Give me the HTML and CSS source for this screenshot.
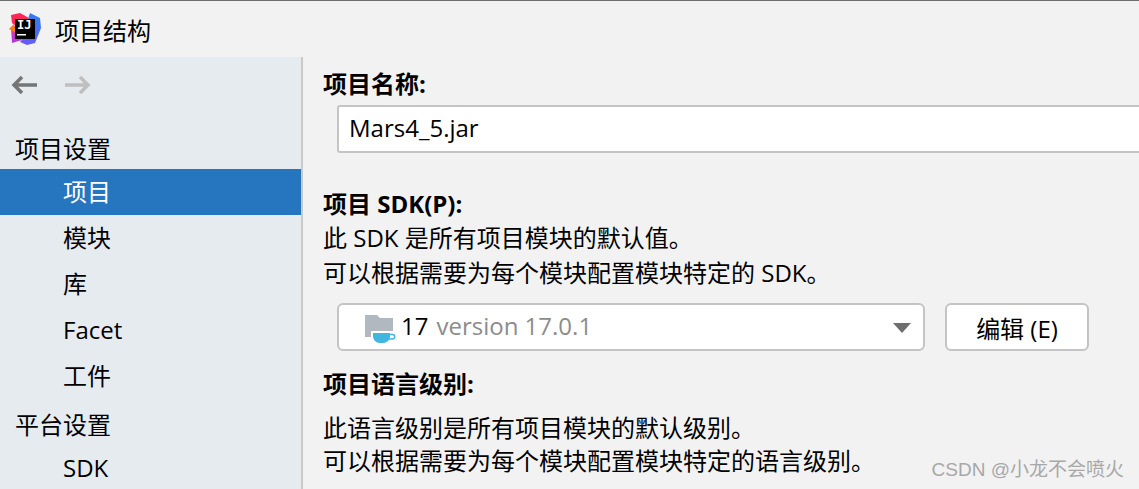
FILE: index.html
```html
<!DOCTYPE html>
<html lang="zh-CN">
<head>
    <meta charset="UTF-8">
    <title>项目结构</title>
    <link rel="stylesheet" href="styles.css">
</head>
<body>
    <header class="titlebar">
        <svg class="logo" width="34" height="34" viewBox="0 0 34 34">
            <defs>
                <linearGradient id="blue" x1="0.8" y1="0" x2="0.3" y2="1">
                    <stop offset="0" stop-color="#2f80ed"/>
                    <stop offset="1" stop-color="#6b57ff"/>
                </linearGradient>
                <linearGradient id="purple" x1="0.5" y1="0" x2="0.3" y2="1">
                    <stop offset="0" stop-color="#ff318c"/>
                    <stop offset="1" stop-color="#a13df0"/>
                </linearGradient>
            </defs>
            <polygon points="20,7 22,1 32,6 33,16 27,31 19,33 12,30 20,20" fill="url(#blue)"/>
            <polygon points="3,16 7,14 14,28 4,31" fill="url(#purple)"/>
            <polygon points="1,17 6,12 8,21" fill="#f97a12"/>
            <polygon points="3,3 12,1 21,6 8,14 4,11" fill="#fe2857"/>
            <rect x="7" y="7" width="20" height="20" fill="#000"/>
            <text class="logo-text" x="9" y="17">IJ</text>
            <rect x="9" y="22" width="9" height="1.500" fill="#fff"/>
        </svg>
        <span class="title">项目结构</span>
    </header>

    <div class="main">
        <aside class="sidebar">
            <div class="arrows">
                <svg width="26" height="20" viewBox="0 0 26 20">
                    <path d="M26 10H3M11 2l-8 8 8 8" fill="none" stroke="#757575" stroke-width="3.500"/>
                </svg>
                <svg width="26" height="20" viewBox="0 0 26 20">
                    <path d="M0 10h23M15 2l8 8-8 8" fill="none" stroke="#bfbfbf" stroke-width="3.500"/>
                </svg>
            </div>
            <div class="group">项目设置</div>
            <div class="item selected">项目</div>
            <div class="item">模块</div>
            <div class="item">库</div>
            <div class="item">Facet</div>
            <div class="item">工件</div>
            <div class="group">平台设置</div>
            <div class="item">SDK</div>
        </aside>

        <section class="content">
            <h2 class="label">项目名称:</h2>
            <input class="name-input" type="text" value="Mars4_5.jar">

            <h2 class="label sdk-label">项目 SDK(P):</h2>
            <p class="desc">此 SDK 是所有项目模块的默认值。</p>
            <p class="desc">可以根据需要为每个模块配置模块特定的 SDK。</p>

            <div class="sdk-row">
                <div class="combo">
                    <svg class="jdk-icon" width="32" height="30" viewBox="0 0 32 30">
                        <path d="M0 1h12l3 3h13v19H0z" fill="#afb9bf"/>
                        <rect x="6" y="17" width="23" height="7" fill="#fff"/>
                        <path d="M8 19h17v3c0 4-3 7-7 7h-3c-4 0-7-3-7-7z" fill="#40b6e0"/>
                        <path d="M25 20.500h2.500a2.200 2.200 0 0 1 0 4.500H23" fill="none" stroke="#40b6e0" stroke-width="1.500"/>
                    </svg>
                    <span class="sdk-name">17</span>
                    <span class="sdk-version">version 17.0.1</span>
                    <span class="caret"></span>
                </div>
                <button class="edit-btn">编辑 (E)</button>
            </div>

            <h2 class="label lang-label">项目语言级别:</h2>
            <p class="lang-desc lang-first">此语言级别是所有项目模块的默认级别。</p>
            <p class="lang-desc">可以根据需要为每个模块配置模块特定的语言级别。</p>
        </section>
    </div>

    <div class="watermark">CSDN @小龙不会喷火</div>
</body>
</html>
```

FILE: styles.css
```css
html, body {
    height: 100%;
}
body {
    margin: 0;
    overflow: hidden;
    background: #f2f2f2;
    color: #000;
    font-family: "Open Sans", "Noto Sans CJK SC", sans-serif;
    font-size: 24px;
    border-top: 1px solid #6e6e6e;
    box-sizing: border-box;
    display: flex;
    flex-direction: column;
}
.titlebar {
    height: 56px;
    flex: none;
    display: flex;
    align-items: center;
    padding-left: 8px;
}
.logo {
    margin-right: 13px;
}
.logo-text {
    font-family: "DejaVu Sans Mono", monospace;
    font-size: 12px;
    font-weight: bold;
    fill: #fff;
}
.title {
    font-size: 24px;
}
.main {
    flex: 1;
    display: flex;
    min-height: 0;
}
.sidebar {
    width: 301px;
    flex: none;
    background: #e6ebf0;
    border-right: 2px solid #c9c9c9;
}
.arrows {
    height: 56px;
    display: flex;
    align-items: center;
    gap: 28px;
    padding-left: 11px;
}
.group {
    height: 43px;
    line-height: 46px;
    padding-left: 15px;
    margin-top: 13px;
}
.item {
    height: 46px;
    line-height: 46px;
    padding-left: 63px;
}
.item + .group {
    margin-top: 3px;
}
.selected {
    background: #2675bf;
    color: #fff;
}
.content {
    flex: 1;
    padding: 10px 0 0 20px;
    min-width: 0;
    overflow: hidden;
}
.label {
    margin: 0;
    font-size: 24px;
    font-weight: 700;
    line-height: 34px;
}
.name-input {
    display: block;
    box-sizing: border-box;
    width: 900px;
    height: 48px;
    margin: 4px 0 0 14px;
    padding: 0 11px 4px 10px;
    background: #fff;
    border: 2px solid #c4c4c4;
    border-radius: 3px 0 0 3px;
    font-family: inherit;
    font-size: 24px;
    color: #000;
}
.sdk-label {
    margin-top: 34px;
    margin-bottom: -1px;
}
.desc {
    margin: 0;
    line-height: 35px;
    font-size: 24px;
}
.sdk-row {
    display: flex;
    gap: 20px;
    margin: 13px 0 0 14px;
}
.combo {
    box-sizing: border-box;
    width: 588px;
    height: 48px;
    display: flex;
    align-items: center;
    background: #fff;
    border: 2px solid #c4c4c4;
    border-radius: 6px;
    padding-left: 26px;
}
.jdk-icon {
    margin: 4px 4px 0 0;
}
.sdk-name {
    margin: 0 8px 4px 0;
}
.sdk-version {
    margin-bottom: 4px;
    color: #8c8c8c;
}
.caret {
    margin-left: auto;
    margin-right: 12px;
    margin-top: 2px;
    width: 0;
    height: 0;
    border-left: 9px solid transparent;
    border-right: 9px solid transparent;
    border-top: 10px solid #6e6e6e;
}
.edit-btn {
    box-sizing: border-box;
    width: 144px;
    height: 48px;
    padding: 0;
    background: #fff;
    border: 2px solid #c4c4c4;
    border-radius: 6px;
    font-family: inherit;
    font-size: 24px;
    color: #000;
}
.lang-label {
    margin-top: 16px;
}
.lang-desc {
    margin: 0;
    line-height: 33px;
    font-size: 24px;
}
.lang-first {
    margin-top: 10px;
}
.watermark {
    position: absolute;
    right: 15px;
    bottom: 8px;
    font-family: "Liberation Sans", "Noto Sans CJK SC", sans-serif;
    font-size: 19px;
    color: #a8a8a8;
}
```
